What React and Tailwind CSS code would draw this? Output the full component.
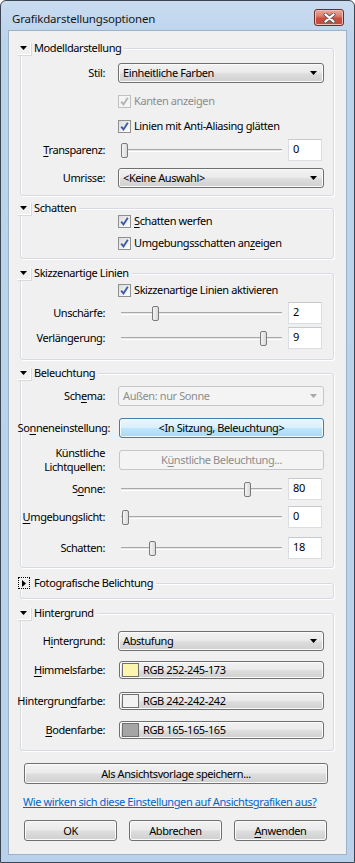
import React from 'react';

const F = "font-['Noto_Sans',sans-serif]";

function Tri() {
  return (
    <svg width="7" height="4" viewBox="0 0 7 4">
      <path d="M0 0h7L3.5 4z" fill="currentColor" />
    </svg>
  );
}

function U({ children }) {
  return <span className="underline decoration-1 underline-offset-[2px]">{children}</span>;
}

function Section({ title, open = true, boxClass = '', className = '', children }) {
  return (
    <div className={`flex flex-col ${className}`}>
      <div className="relative z-10 ml-[8px] h-[14px] w-fit flex items-center bg-[#f0f0f0]">
        {open ? (
          <span className="w-[14px] h-[13px] flex items-center justify-center text-black border-b border-r border-white shadow-[1px_1px_0_#d9d9d9]">
            <Tri />
          </span>
        ) : (
          <span className="w-[12px] h-[12px] ml-[1px] mr-[1px] flex items-center justify-center border border-dotted border-black">
            <svg width="4" height="7" viewBox="0 0 4 7">
              <path d="M0 0v7l4-3.5z" fill="#000" />
            </svg>
          </span>
        )}
        <span className="pl-[3px] pr-[3px] leading-[14px]">{title}</span>
      </div>
      <div
        className={`-mt-[7px] ml-[11px] mr-[12px] rounded-[3px] border border-[#d5dbe0] shadow-[inset_1px_1px_0_#ffffff,1px_1px_0_#ffffff] flex flex-col ${boxClass}`}
      >
        {children}
      </div>
    </div>
  );
}

function Row({ label, className = '', labelClass = '', children }) {
  return (
    <div className={`flex items-center ${className}`}>
      <div className={`w-[84px] shrink-0 flex justify-end whitespace-nowrap ${labelClass}`}>{label}</div>
      <div className="ml-[13px] flex items-center">{children}</div>
    </div>
  );
}

function Dropdown({ children, disabled }) {
  return (
    <div
      className={`w-[206px] h-[20px] rounded-[3px] border flex items-center justify-between pl-[4px] pr-[6px] ${
        disabled
          ? 'border-[#c3c6ca] bg-[#f4f4f4] text-[#8d8d8d]'
          : 'border-[#707070] bg-[linear-gradient(#f2f2f2_0%,#ebebeb_45%,#dddddd_55%,#cfcfcf_100%)] shadow-[inset_0_0_0_1px_#fbfbfb] text-black'
      }`}
    >
      <span className="leading-[16px]">{children}</span>
      <span className={disabled ? 'text-[#a8a8a8]' : 'text-black'}>
        <Tri />
      </span>
    </div>
  );
}

function Check({ children, disabled, className = '' }) {
  return (
    <div className={`flex items-center h-[20px] ${className}`}>
      <span
        className={`w-[13px] h-[13px] flex items-center justify-center border ${
          disabled
            ? 'border-[#c0c0c0] bg-[#f4f4f4]'
            : 'border-[#8e8f8f] bg-[linear-gradient(135deg,#dcdcdc,#ffffff)]'
        }`}
      >
        <svg width="11" height="11" viewBox="0 0 11 11">
          <path
            d="M2.2 5.6L4.5 8.4L8.8 1.8"
            fill="none"
            stroke={disabled ? '#b3b3b3' : '#3d5aa6'}
            strokeWidth="1.9"
          />
        </svg>
      </span>
      <span className={`ml-[3px] leading-[16px] ${disabled ? 'text-[#8d8d8d]' : ''}`}>{children}</span>
    </div>
  );
}

function Slider({ thumb }) {
  return (
    <div className="relative w-[166px] h-[22px]">
      <div className="absolute left-[3px] w-[161px] top-[10px] h-[3px] border-t border-[#a8a8a8] border-b border-b-white bg-[#e6e6e6]" />
      <div
        className={`absolute top-[4px] w-[7px] h-[15px] rounded-[2px] border border-[#7a7a7a] bg-[linear-gradient(90deg,#f4f4f4,#dadada)] ${thumb}`}
      />
    </div>
  );
}

function Num({ children }) {
  return (
    <div className="ml-[4px] w-[34px] h-[22px] bg-white border border-[#dadde2] border-t-[#c5c8cd] flex items-center pl-[4px] pb-[2px] leading-[16px]">
      {children}
    </div>
  );
}

function SliderRow({ label, thumb, value, className = '' }) {
  return (
    <Row label={label} className={`h-[22px] ${className}`}>
      <Slider thumb={thumb} />
      <Num>{value}</Num>
    </Row>
  );
}

function Btn({ children, className = '', variant = 'normal' }) {
  const look =
    variant === 'hot'
      ? 'border-[#3c7fb1] bg-[linear-gradient(#eaf6fd_0%,#d9f0fc_48%,#bee6fd_52%,#a7d9f5_100%)] shadow-[inset_0_0_0_1px_#f4fbfe]'
      : variant === 'off'
      ? 'border-[#c3c6ca] bg-[#f4f4f4] text-[#8d8d8d]'
      : 'border-[#707070] bg-[linear-gradient(#f2f2f2_0%,#ebebeb_45%,#dddddd_55%,#cfcfcf_100%)] shadow-[inset_0_0_0_1px_#fbfbfb]';
  return (
    <div className={`rounded-[3px] border flex items-center justify-center leading-[16px] ${look} ${className}`}>
      {children}
    </div>
  );
}

function ColorBtn({ swatch, children }) {
  return (
    <Btn className="ml-[1px] w-[205px] h-[18px] !justify-start">
      <span className={`ml-[2px] w-[17px] h-[14px] border border-[#707070] ${swatch}`} />
      <span className="ml-[4px]">{children}</span>
    </Btn>
  );
}

function CloseBtn() {
  return (
    <div className="mt-[8px] mr-[3px] w-[30px] h-[17px] rounded-[3px] border border-[#6b2b26] bg-[linear-gradient(#e9a99e_0%,#d8806f_40%,#c75041_55%,#c44b3c_100%)] shadow-[inset_0_0_0_1px_#eebdb4] flex items-center justify-center">
      <svg width="13" height="10" viewBox="0 0 13 10">
        <path d="M2.5 1.5L10.5 8.5M10.5 1.5L2.5 8.5" stroke="#5a5a5a" strokeWidth="4" strokeLinecap="round" />
        <path d="M2.5 1.5L10.5 8.5M10.5 1.5L2.5 8.5" stroke="#ffffff" strokeWidth="2.2" strokeLinecap="round" />
      </svg>
    </div>
  );
}

export default function App() {
  return (
    <div
      className={`w-[355px] h-[863px] ${F} text-[11px] tracking-[-0.4px] text-black rounded-t-[6px] border border-[#3c4653] bg-[linear-gradient(#c9dcf0,#bcd3ec_40px,#b9d1ea)] flex flex-col px-[7px] pb-[7px]`}
    >
      <div className="h-[29px] shrink-0 flex items-start justify-between">
        <span className="ml-[4px] mt-[10px] text-[11.5px] leading-[16px] tracking-[-0.2px] text-[#161616]">
          Grafikdarstellungsoptionen
        </span>
        <CloseBtn />
      </div>

      <div className="flex-1 bg-[#f0f0f0] border border-[#9db1c7] flex flex-col">
        <Section title="Modelldarstellung" className="mt-[10px]" boxClass="h-[148px]">
          <Row label="Stil:" className="mt-[14px] h-[20px]">
            <Dropdown>Einheitliche Farben</Dropdown>
          </Row>
          <Row label="" className="mt-[8px]">
            <Check disabled>Kanten anzeigen</Check>
          </Row>
          <Row label="" className="mt-[5px]">
            <Check>Linien mit Anti-Aliasing glätten</Check>
          </Row>
          <SliderRow
            className="mt-[3px]"
            label={
              <span>
                <U>T</U>ransparenz:
              </span>
            }
            thumb="left-[3px]"
            value="0"
          />
          <Row label="Umrisse:" className="mt-[7px] h-[20px]">
            <Dropdown>&lt;Keine Auswahl&gt;</Dropdown>
          </Row>
        </Section>

        <Section title="Schatten" className="mt-[5px]" boxClass="h-[51px]">
          <Row label="" className="mt-[2px]">
            <Check>
              <U>S</U>chatten werfen
            </Check>
          </Row>
          <Row label="" className="mt-[2px]">
            <Check>
              Umgebungsschatten an<U>z</U>eigen
            </Check>
          </Row>
        </Section>

        <Section title="Skizzenartige Linien" className="mt-[7px]" boxClass="h-[87px]">
          <Row label="" className="mt-[6px]">
            <Check>Skizzenartige Linien aktivieren</Check>
          </Row>
          <SliderRow className="mt-[2px]" label="Unschärfe:" thumb="left-[34px]" value="2" />
          <SliderRow className="mt-[3px]" label="Verlängerung:" thumb="left-[142px]" value="9" />
        </Section>

        <Section title="Beleuchtung" className="mt-[6px]" boxClass="h-[195px]">
          <Row
            label={
              <span>
                Sch<U>e</U>ma:
              </span>
            }
            className="mt-[12px] h-[20px]"
          >
            <Dropdown disabled>Außen: nur Sonne</Dropdown>
          </Row>
          <Row
            label={
              <span className="mr-[-5px]">
                So<U>n</U>neneinstellung:
              </span>
            }
            className="mt-[12px] h-[20px]"
          >
            <Btn variant="hot" className="ml-[1px] w-[205px] h-[20px]">
              &lt;In Sitzung, Beleuchtung&gt;
            </Btn>
          </Row>
          <Row
            label={
              <span className="text-right leading-[14px]">
                Künstliche
                <br />
                Lichtquellen:
              </span>
            }
            className="mt-[12px] h-[20px]"
          >
            <Btn variant="off" className="ml-[1px] w-[205px] h-[20px]">
              <span>
                K<U>ü</U>nstliche Beleuchtung...
              </span>
            </Btn>
          </Row>
          <SliderRow
            className="mt-[8px]"
            label={
              <span>
                S<U>o</U>nne:
              </span>
            }
            thumb="left-[126px]"
            value="80"
          />
          <SliderRow
            className="mt-[6px]"
            label={
              <span>
                <U>U</U>mgebungslicht:
              </span>
            }
            thumb="left-[4px]"
            value="0"
          />
          <SliderRow className="mt-[9px]" label="Schatten:" thumb="left-[31px]" value="18" />
        </Section>

        <Section title="Fotografische Belichtung" open={false} className="mt-[8px]" boxClass="h-[16px]" />

        <Section title="Hintergrund" className="mt-[7px]" boxClass="h-[138px]">
          <Row
            label={
              <span>
                H<U>i</U>ntergrund:
              </span>
            }
            className="mt-[17px] h-[20px]"
          >
            <Dropdown>Abstufung</Dropdown>
          </Row>
          <Row
            label={
              <span>
                <U>H</U>immelsfarbe:
              </span>
            }
            className="mt-[10px] h-[18px]"
          >
            <ColorBtn swatch="bg-[#fcf5ad]">RGB 252-245-173</ColorBtn>
          </Row>
          <Row
            label={
              <span>
                Hintergrun<U>d</U>farbe:
              </span>
            }
            className="mt-[13px] h-[18px]"
          >
            <ColorBtn swatch="bg-[#f2f2f2]">RGB 242-242-242</ColorBtn>
          </Row>
          <Row
            label={
              <span>
                <U>B</U>odenfarbe:
              </span>
            }
            className="mt-[11px] h-[18px]"
          >
            <ColorBtn swatch="bg-[#a5a5a5]">RGB 165-165-165</ColorBtn>
          </Row>
        </Section>

        <Btn className="mt-[12px] ml-[15px] w-[304px] h-[21px]">Als Ansichtsvorlage speichern...</Btn>

        <a href="#" className="mt-[10px] ml-[14px] self-start leading-[16px] text-[#0066cc] underline">
          Wie wirken sich diese Einstellungen auf Ansichtsgrafiken aus?
        </a>

        <div className="mt-[10px] ml-[15px] flex gap-[12px]">
          <Btn className="w-[93px] h-[21px]">OK</Btn>
          <Btn className="w-[93px] h-[21px]">Abbrechen</Btn>
          <Btn className="w-[93px] h-[21px]">
            <span>
              <U>A</U>nwenden
            </span>
          </Btn>
        </div>
      </div>
    </div>
  );
}
